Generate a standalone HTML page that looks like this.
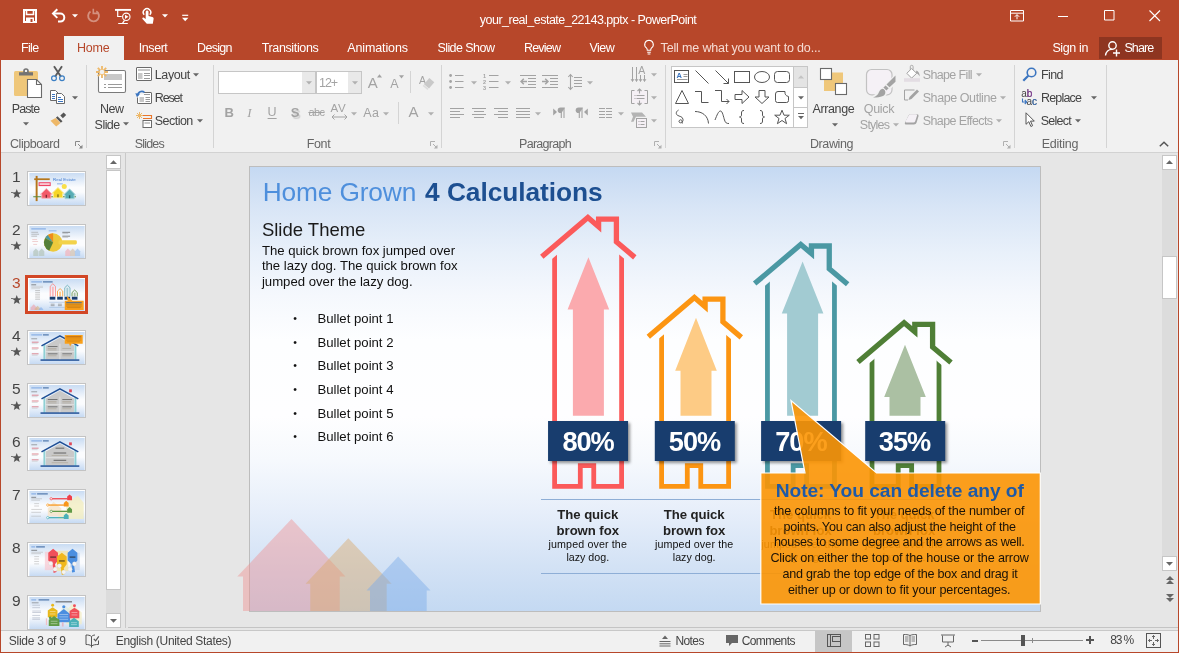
<!DOCTYPE html>
<html><head><meta charset="utf-8"><title>PowerPoint</title>
<style>
*{box-sizing:border-box;margin:0;padding:0}
html,body{width:1179px;height:653px;overflow:hidden;background:#e6e6e6;font-family:"Liberation Sans",sans-serif;font-size:12px;color:#444}
.abs{position:absolute}
#win{position:absolute;left:0;top:0;width:1179px;height:653px;overflow:hidden;background:#e6e6e6}
#titlebar{position:absolute;left:0;top:0;width:1179px;height:60px;background:#b7472a}
#ribbon{position:absolute;left:1px;top:60px;width:1177px;height:92px;background:#f1f1f1}
#ribline{position:absolute;left:1px;top:152px;width:1177px;height:1px;background:#d2d2d2}
#status{position:absolute;left:1px;top:631px;width:1177px;height:21px;background:#f1f1f1}
.bl{position:absolute;top:60px;width:1px;height:593px;background:#b7472a}
.t{position:absolute;white-space:nowrap;line-height:1}
.w{color:#fff}
</style></head><body>
<div id="win"><div id="ly" style="position:absolute;left:0;top:0;width:1179px;height:653px;will-change:transform">
<div id="titlebar"></div>
<div id="ribbon"></div>
<div id="ribline"></div>
<div class="abs" style="left:64px;top:36px;width:60px;height:25px;background:#f1f1f1;"></div>
<div class="t" style="left:21.00px;top:41.75px;font-size:12.5px;color:#fff;letter-spacing:-0.660px;">File</div>
<div class="t" style="left:77.00px;top:41.75px;font-size:12.5px;color:#b7472a;letter-spacing:-0.210px;">Home</div>
<div class="t" style="left:138.80px;top:41.75px;font-size:12.5px;color:#fff;letter-spacing:-0.443px;">Insert</div>
<div class="t" style="left:197.10px;top:41.75px;font-size:12.5px;color:#fff;letter-spacing:-0.718px;">Design</div>
<div class="t" style="left:261.70px;top:41.75px;font-size:12.5px;color:#fff;letter-spacing:-0.361px;">Transitions</div>
<div class="t" style="left:347.20px;top:41.75px;font-size:12.5px;color:#fff;letter-spacing:-0.113px;">Animations</div>
<div class="t" style="left:437.40px;top:41.75px;font-size:12.5px;color:#fff;letter-spacing:-0.554px;">Slide Show</div>
<div class="t" style="left:523.90px;top:41.75px;font-size:12.5px;color:#fff;letter-spacing:-0.781px;">Review</div>
<div class="t" style="left:589.40px;top:41.75px;font-size:12.5px;color:#fff;letter-spacing:-0.517px;">View</div>
<div class="t" style="left:660.60px;top:41.75px;font-size:12.5px;color:#f6dcd4;letter-spacing:-0.155px;">Tell me what you want to do...</div>
<div class="t" style="left:479.80px;top:13.75px;font-size:12.5px;color:#fff;letter-spacing:-0.511px;">your_real_estate_22143.pptx - PowerPoint</div>
<div class="t" style="left:1052.40px;top:41.75px;font-size:12.5px;color:#fff;letter-spacing:-0.374px;">Sign in</div>
<div class="abs" style="left:1099px;top:37px;width:63px;height:22px;background:#8e3520;"></div>
<div class="t" style="left:1124.40px;top:41.75px;font-size:12.5px;color:#fff;letter-spacing:-0.871px;">Share</div>
<svg class="abs" style="left:1104px;top:40px;" width="18" height="17" viewBox="0 0 18 17"><g fill="none" stroke="#fff" stroke-width="1.4"><circle cx="8.5" cy="5.5" r="3.7"/><path d="M1.5 15.5 C2.2 11.2 5 9.4 8 9.4"/><path d="M12.5 9.5v7M9 13h7"/></g></svg>
<svg class="abs" style="left:643px;top:39px;" width="12" height="17" viewBox="0 0 12 17"><g fill="none" stroke="#fff" stroke-width="1.1"><path d="M6 1.2a4.3 4.3 0 0 0-2.6 7.7c.6.6.9 1.3.9 2.4h3.4c0-1.1.3-1.8.9-2.4A4.3 4.3 0 0 0 6 1.200z"/><path d="M4.200 13.2h3.600M4.600 15h2.800"/></g></svg>
<svg class="abs" style="left:22px;top:8px;" width="16" height="16" viewBox="0 0 16 16"><path d="M2 2h12v12h-12z" fill="none" stroke="#fff" stroke-width="2"/><path d="M4.500 2.500v4h7v-4" fill="none" stroke="#fff" stroke-width="1.600"/><path d="M4 9.500h8v4.500h-8z" fill="#fff"/><rect x="8.500" y="11" width="2" height="3" fill="#b7472a"/></svg>
<svg class="abs" style="left:51px;top:8px;" width="17" height="15" viewBox="0 0 17 15"><g fill="none" stroke="#fff" stroke-width="2" stroke-linejoin="miter"><path d="M6.300 1.300L2 5.600l4.300 4.300"/><path d="M2.500 5.600h6.800a4 4 0 0 1 0 8.000h-2.300"/></g></svg>
<svg class="abs" style="left:71.5px;top:14px;" width="6" height="4" viewBox="0 0 6 4"><path d="M0 0.300h6l-3 3.200z" fill="#fff"/></svg>
<svg class="abs" style="left:86px;top:8px;" width="16" height="16" viewBox="0 0 16 16"><g fill="none" stroke="#d4907e" stroke-width="1.900"><path d="M10.300 3.300a5.400 5.400 0 1 1-5.800 0.200"/><path d="M7.300 0.800v4.600h4.600" stroke-width="1.600"/></g></svg>
<svg class="abs" style="left:114px;top:8px;" width="19" height="17" viewBox="0 0 19 17"><g fill="none" stroke="#fff"><path d="M1 1.900h16" stroke-width="1.900"/><path d="M3.700 2v6.500h4" stroke-width="1.200"/><circle cx="12.300" cy="8.800" r="3.700" stroke-width="1.100"/><path d="M10.500 12.300l-2 3M4.200 15.500h9.600" stroke-width="1.200"/></g><path d="M11 6.700v4.200l3.400-2.100z" fill="#fff"/></svg>
<svg class="abs" style="left:141px;top:6px;" width="14" height="19" viewBox="0 0 14 19"><g fill="none" stroke="#fff" stroke-width="1.500"><path d="M3.200 8.800a3.700 3.700 0 1 1 5.600 0"/></g><path d="M4.700 5.800a1.400 1.400 0 0 1 2.800 0v4.300l3.800 0.800c1 0.200 1.500 0.900 1.300 2l-0.800 4.800h-6l-4.300-4.800c-0.600-0.900 0.300-1.900 1.400-1.200l1.800 1.300z" fill="#fff"/></svg>
<svg class="abs" style="left:161.5px;top:14px;" width="6" height="4" viewBox="0 0 6 4"><path d="M0 0.300h6l-3 3.200z" fill="#fff"/></svg>
<svg class="abs" style="left:182px;top:14px;" width="7" height="8" viewBox="0 0 7 8"><path d="M0.200 1.300h6" stroke="#fff" stroke-width="1.200"/><path d="M0 3.800h6.400l-3.200 3.400z" fill="#fff"/></svg>
<svg class="abs" style="left:1010px;top:10px;" width="14" height="12" viewBox="0 0 14 12"><g fill="none" stroke="#fff" stroke-width="1"><path d="M0.500 0.500h13v10.500h-13z"/><path d="M0.500 3.200h13"/><path d="M7 9.300v-4.500M4.800 6.800l2.200-2.200 2.200 2.200"/></g></svg>
<div class="abs" style="left:1058px;top:16px;width:10px;height:1px;background:#fff;"></div>
<svg class="abs" style="left:1104px;top:10px;" width="11" height="11" viewBox="0 0 11 11"><path d="M0.500 0.500h9.500v9.500h-9.500z" fill="none" stroke="#fff" stroke-width="1"/></svg>
<svg class="abs" style="left:1149px;top:10px;" width="12" height="12" viewBox="0 0 12 12"><path d="M0.500 0.500l10.500 10.500M11 0.500l-10.500 10.500" fill="none" stroke="#fff" stroke-width="1.100"/></svg>
<div class="abs" style="left:86px;top:65px;width:1px;height:83px;background:#d4d4d4;"></div>
<div class="abs" style="left:213px;top:65px;width:1px;height:83px;background:#d4d4d4;"></div>
<div class="abs" style="left:441px;top:65px;width:1px;height:83px;background:#d4d4d4;"></div>
<div class="abs" style="left:665px;top:65px;width:1px;height:83px;background:#d4d4d4;"></div>
<div class="abs" style="left:1014px;top:65px;width:1px;height:83px;background:#d4d4d4;"></div>
<div class="abs" style="left:1106px;top:65px;width:1px;height:83px;background:#d4d4d4;"></div>
<svg class="abs" style="left:13px;top:67px;" width="30" height="32" viewBox="0 0 30 32"><rect x="1" y="4" width="24" height="25" rx="1.500" fill="#efc77a"/>
<path d="M6 8.500v-3.200h4.200v-1.300a2.800 2.800 0 0 1 5.600 0v1.300h4.200v3.200z" fill="#737373"/><circle cx="13" cy="3.900" r="1.200" fill="#f1f1f1"/>
<path d="M14.500 12.500h9l5 5v13h-14z" fill="#fff" stroke="#6a6a6a" stroke-width="1.100"/><path d="M23.500 12.500v5h5" fill="none" stroke="#6a6a6a" stroke-width="1.100"/></svg>
<div class="t" style="left:11.80px;top:102.75px;font-size:12.5px;color:#444;letter-spacing:-0.913px;">Paste</div>
<svg class="abs" style="left:22.6px;top:122px;" width="6" height="4" viewBox="0 0 6 4"><path d="M0 0.200h6l-3 3.300z" fill="#666"/></svg>
<svg class="abs" style="left:50px;top:65px;" width="16" height="17" viewBox="0 0 16 17"><g fill="none"><path d="M4 1.300l7 10.500M12 1.300l-7 10.500" stroke="#5a5a5a" stroke-width="1.900"/><circle cx="4" cy="13.300" r="2.400" stroke="#3b7fc4" stroke-width="1.200"/><circle cx="12" cy="13.300" r="2.400" stroke="#3b7fc4" stroke-width="1.200"/></g></svg>
<svg class="abs" style="left:49px;top:89px;" width="17" height="16" viewBox="0 0 17 16"><g fill="#fff" stroke="#6a6a6a" stroke-width="1"><path d="M1.500 1.500h5l3 3v7h-8z"/><path d="M7.500 4.500h5l3 3v7h-8z"/></g><g stroke="#3b75c0" stroke-width="1"><path d="M3 5.500h3M3 7.500h3M3 9.500h3M9 8.500h3M9 10.500h5M9 12.500h5"/></g></svg>
<svg class="abs" style="left:71.7px;top:95.5px;" width="6" height="4" viewBox="0 0 6 4"><path d="M0 0.200h6l-3 3.300z" fill="#666"/></svg>
<svg class="abs" style="left:50px;top:112px;" width="17" height="15" viewBox="0 0 17 15"><path d="M10.300 3.600l3.300-3.200 2.600 2.600-3.300 3.200z" fill="#555"/><path d="M7.500 4.200l5 5-1.600 1.600-5-5z" fill="#555"/><path d="M5.600 6.100l4.900 4.900-4.300 3.600-5.700-5.900z" fill="#eeb868"/></svg>
<div class="t" style="left:10.00px;top:137.75px;font-size:12.5px;color:#666;letter-spacing:-0.433px;">Clipboard</div>
<svg class="abs" style="left:74.5px;top:140.5px;" width="8" height="8" viewBox="0 0 8 8"><g fill="none" stroke="#8a8a8a" stroke-width="1"><path d="M0.500 5v-4.500h4.500"/><path d="M3 3l4 4"/></g><path d="M7.500 3.800v3.700h-3.700z" fill="#8a8a8a"/></svg>
<svg class="abs" style="left:95px;top:64px;" width="32" height="30" viewBox="0 0 32 30"><rect x="3.500" y="6.500" width="27" height="22" rx="1.500" fill="#fff" stroke="#7a7a7a" stroke-width="1.100"/><rect x="9" y="10" width="18" height="6" fill="#c8c8c8"/><path d="M9 20.500h2M13 20.500h14M9 23.500h2M13 23.500h14" stroke="#9a9a9a" stroke-width="1"/>
<g transform="translate(0,1)"><g stroke="#eeb868" stroke-width="1.800"><path d="M7 1v12M1 7h12M2.800 2.800l8.400 8.400M11.200 2.800l-8.400 8.400"/></g><circle cx="7" cy="7" r="2.300" fill="#f1f1f1"/></g></svg>
<div class="t" style="left:100.00px;top:102.75px;font-size:12.5px;color:#444;letter-spacing:-0.535px;">New</div>
<div class="t" style="left:94.60px;top:118.75px;font-size:12.5px;color:#444;letter-spacing:-0.539px;">Slide</div>
<svg class="abs" style="left:122.8px;top:122px;" width="6" height="4" viewBox="0 0 6 4"><path d="M0 0.200h6l-3 3.300z" fill="#666"/></svg>
<svg class="abs" style="left:136px;top:67px;" width="17" height="15" viewBox="0 0 17 15"><rect x="0.500" y="0.500" width="15" height="13" rx="0.500" fill="#fff" stroke="#6a6a6a" stroke-width="1"/><rect x="2" y="2" width="12" height="2" fill="#c8c8c8"/><rect x="2" y="6" width="4.500" height="6" fill="#c8c8c8"/><path d="M8 6.500h6M8 8.500h6M8 11.500h6" stroke="#9a9a9a" stroke-width="1"/></svg>
<div class="t" style="left:154.80px;top:68.75px;font-size:12.5px;color:#444;letter-spacing:-0.405px;">Layout</div>
<svg class="abs" style="left:193.4px;top:72.5px;" width="6" height="4" viewBox="0 0 6 4"><path d="M0 0.200h6l-3 3.300z" fill="#666"/></svg>
<svg class="abs" style="left:135px;top:89px;" width="18" height="16" viewBox="0 0 18 16"><rect x="2.500" y="3.500" width="14" height="11" rx="0.500" fill="#fff" stroke="#6a6a6a" stroke-width="1"/><rect x="4.500" y="8" width="4.500" height="5" fill="#c8c8c8"/><path d="M10.500 8.500h4.500M10.500 10.500h4.500M10.500 12.500h4.500M9 5.500h6" stroke="#9a9a9a" stroke-width="1"/>
<path d="M0 1h9v4.500h-5.500v3h-3.500z" fill="#f1f1f1"/><path d="M2.800 6.500a4 4 0 0 1 6.700-3" fill="none" stroke="#3b75c0" stroke-width="1.600"/><path d="M0.300 4.300l4.800 0.500-3.100 3.500z" fill="#3b75c0"/></svg>
<div class="t" style="left:154.80px;top:91.75px;font-size:12.5px;color:#444;letter-spacing:-1.150px;">Reset</div>
<svg class="abs" style="left:135px;top:111px;" width="19" height="18" viewBox="0 0 19 18"><g stroke="#eeb868" stroke-width="1"><path d="M4.500 1v7M1 4.500h7M2 2l5 5M7 2l-5 5"/></g><path d="M8 4.500h8.500v3h-8.500" fill="none" stroke="#e8762c" stroke-width="1.100"/><rect x="8" y="9.500" width="8.500" height="7" fill="#fff" stroke="#6a6a6a" stroke-width="1"/><rect x="9.500" y="11" width="5.500" height="2" fill="#c8c8c8"/></svg>
<div class="t" style="left:154.80px;top:114.75px;font-size:12.5px;color:#444;letter-spacing:-0.542px;">Section</div>
<svg class="abs" style="left:196.8px;top:118.5px;" width="6" height="4" viewBox="0 0 6 4"><path d="M0 0.200h6l-3 3.300z" fill="#666"/></svg>
<div class="t" style="left:134.70px;top:137.75px;font-size:12.5px;color:#666;letter-spacing:-0.807px;">Slides</div>
<div class="abs" style="left:218px;top:71px;width:98px;height:23px;background:#fff;border:1px solid #c6c6c6"></div>
<div class="abs" style="left:302px;top:72px;width:13px;height:21px;background:#e9e9e9;"></div>
<svg class="abs" style="left:305.5px;top:81px;" width="6" height="4" viewBox="0 0 6 4"><path d="M0 0.200h6l-3 3.300z" fill="#b0b0b0"/></svg>
<div class="abs" style="left:316px;top:71px;width:46px;height:23px;background:#fff;border:1px solid #c6c6c6"></div>
<div class="abs" style="left:348px;top:72px;width:13px;height:21px;background:#e9e9e9;"></div>
<svg class="abs" style="left:351.5px;top:81px;" width="6" height="4" viewBox="0 0 6 4"><path d="M0 0.200h6l-3 3.300z" fill="#b0b0b0"/></svg>
<div class="t" style="left:319.00px;top:76.75px;font-size:12.5px;color:#a3a3a3;letter-spacing:-1.068px;">12+</div>
<div class="t" style="left:367.70px;top:75.00px;font-size:15px;color:#a3a3a3;">A</div>
<svg class="abs" style="left:376.5px;top:74px;" width="5" height="4" viewBox="0 0 5 4"><path d="M0 3.500h5l-2.500-3.300z" fill="#a3a3a3"/></svg>
<div class="t" style="left:390.20px;top:77.75px;font-size:12.5px;color:#a3a3a3;">A</div>
<svg class="abs" style="left:398.5px;top:74.5px;" width="5" height="4" viewBox="0 0 5 4"><path d="M0 0.200h5l-2.500 3.300z" fill="#a3a3a3"/></svg>
<div class="abs" style="left:410px;top:71px;width:1px;height:22px;background:#d4d4d4;"></div>
<div class="t" style="left:418.90px;top:74.75px;font-size:10.5px;color:#a3a3a3;">A</div>
<svg class="abs" style="left:421px;top:77px;" width="14" height="13" viewBox="0 0 14 13"><path d="M8.300 1l5 4.200-5.300 6.300-5-4.200z" fill="#c9c9c9"/><path d="M2.700 7.800l4.800 4-1 1.100-4.800-4z" fill="#dcdcdc"/></svg>
<div class="t" style="left:224.40px;top:106.00px;font-size:13px;color:#a3a3a3;font-weight:bold;">B</div>
<div class="t" style="left:247.20px;top:106.00px;font-size:13px;color:#a3a3a3;font-style:italic;font-family:'Liberation Serif',serif;">I</div>
<div class="t" style="left:267.60px;top:105.75px;font-size:12.5px;color:#a3a3a3;text-decoration:underline;text-underline-offset:1.500px;">U</div>
<div class="t" style="left:290.70px;top:106.00px;font-size:13px;color:#a3a3a3;font-weight:bold;text-shadow:1.500px 1.500px 1px #cfcfcf;">S</div>
<div class="t" style="left:308.40px;top:106.50px;font-size:11px;color:#a3a3a3;letter-spacing:-0.511px;text-decoration:line-through;">abc</div>
<div class="t" style="left:330.60px;top:103.25px;font-size:11.5px;color:#a3a3a3;letter-spacing:0.656px;">AV</div>
<svg class="abs" style="left:331px;top:114px;" width="17" height="6" viewBox="0 0 17 6"><path d="M1 3h15M3.500 0.500l-2.500 2.500 2.500 2.500M13.500 0.500l2.500 2.500-2.500 2.500" fill="none" stroke="#a3a3a3" stroke-width="1"/></svg>
<svg class="abs" style="left:350.8px;top:111.5px;" width="6" height="4" viewBox="0 0 6 4"><path d="M0 0.200h6l-3 3.300z" fill="#b0b0b0"/></svg>
<div class="t" style="left:363.30px;top:106.75px;font-size:12.5px;color:#a3a3a3;letter-spacing:0.305px;">Aa</div>
<svg class="abs" style="left:383.4px;top:111.5px;" width="6" height="4" viewBox="0 0 6 4"><path d="M0 0.200h6l-3 3.300z" fill="#b0b0b0"/></svg>
<div class="abs" style="left:398px;top:102px;width:1px;height:22px;background:#d4d4d4;"></div>
<div class="t" style="left:408.40px;top:104.00px;font-size:15px;color:#a3a3a3;">A</div>
<svg class="abs" style="left:427.6px;top:111.5px;" width="6" height="4" viewBox="0 0 6 4"><path d="M0 0.200h6l-3 3.300z" fill="#b0b0b0"/></svg>
<div class="t" style="left:306.70px;top:137.75px;font-size:12.5px;color:#666;letter-spacing:-0.327px;">Font</div>
<svg class="abs" style="left:429.8px;top:140.5px;" width="8" height="8" viewBox="0 0 8 8"><g fill="none" stroke="#b0b0b0" stroke-width="1"><path d="M0.500 5v-4.500h4.500"/><path d="M3 3l4 4"/></g><path d="M7.500 3.800v3.700h-3.700z" fill="#b0b0b0"/></svg>
<svg class="abs" style="left:449px;top:73px;" width="16" height="17" viewBox="0 0 16 17"><g fill="#a3a3a3"><circle cx="1.600" cy="2.500" r="1.400"/><circle cx="1.600" cy="8.500" r="1.400"/><circle cx="1.600" cy="14.500" r="1.400"/></g><path d="M6 2.500h8.500M6 8.500h8.500M6 14.500h8.500" stroke="#a3a3a3" stroke-width="1"/></svg>
<svg class="abs" style="left:470.6px;top:80.5px;" width="6" height="4" viewBox="0 0 6 4"><path d="M0 0.200h6l-3 3.300z" fill="#b0b0b0"/></svg>
<svg class="abs" style="left:483px;top:73px;" width="16" height="17" viewBox="0 0 16 17"><path d="M6 2.500h9.500M6 8.500h9.500M6 14.500h9.500" stroke="#a3a3a3" stroke-width="1"/><g font-family="Liberation Sans,sans-serif" font-size="5.500" font-weight="bold" fill="#a3a3a3"><text x="0" y="4.500">1</text><text x="0" y="10.500">2</text><text x="0" y="16.500">3</text></g></svg>
<svg class="abs" style="left:504.5px;top:80.5px;" width="6" height="4" viewBox="0 0 6 4"><path d="M0 0.200h6l-3 3.300z" fill="#b0b0b0"/></svg>
<svg class="abs" style="left:520px;top:73px;" width="17" height="16" viewBox="0 0 17 16"><path d="M0 2.500h16M8 5.500h8M8 8.500h8M8 11.500h8M0 14.500h16" stroke="#a3a3a3" stroke-width="1"/><path d="M1 8.500h6M3.800 5.700l-2.800 2.800 2.800 2.800" fill="none" stroke="#a3a3a3" stroke-width="1.500"/></svg>
<svg class="abs" style="left:542px;top:73px;" width="17" height="16" viewBox="0 0 17 16"><path d="M0 2.500h16M8 5.500h8M8 8.500h8M8 11.500h8M0 14.500h16" stroke="#a3a3a3" stroke-width="1"/><path d="M0 8.500h6M3.200 5.700l2.800 2.800-2.800 2.800" fill="none" stroke="#a3a3a3" stroke-width="1.500"/></svg>
<svg class="abs" style="left:567px;top:73px;" width="16" height="18" viewBox="0 0 16 18"><path d="M7 4.500h8M7 7.500h8M7 10.500h8M7 13.500h8" stroke="#a3a3a3" stroke-width="1"/><path d="M3.500 1.500v15M1.300 4l2.200-2.500 2.200 2.500M1.300 14l2.200 2.500 2.200-2.500" fill="none" stroke="#a3a3a3" stroke-width="1.100"/></svg>
<svg class="abs" style="left:587.3px;top:80.5px;" width="6" height="4" viewBox="0 0 6 4"><path d="M0 0.200h6l-3 3.300z" fill="#b0b0b0"/></svg>
<svg class="abs" style="left:450px;top:107px;" width="15" height="12" viewBox="0 0 15 12"><path d="M0 1.500h14M0 4.500h10M0 7.500h14M0 10.500h10" stroke="#a3a3a3" stroke-width="1"/></svg>
<svg class="abs" style="left:472px;top:107px;" width="15" height="12" viewBox="0 0 15 12"><path d="M0 1.500h14M2 4.500h10M0 7.500h14M2 10.500h10" stroke="#a3a3a3" stroke-width="1"/></svg>
<svg class="abs" style="left:494px;top:107px;" width="15" height="12" viewBox="0 0 15 12"><path d="M0 1.500h14M4 4.500h10M0 7.500h14M4 10.500h10" stroke="#a3a3a3" stroke-width="1"/></svg>
<svg class="abs" style="left:516px;top:107px;" width="15" height="12" viewBox="0 0 15 12"><path d="M0 1.500h14M0 4.500h14M0 7.500h14M0 10.500h14" stroke="#a3a3a3" stroke-width="1"/></svg>
<svg class="abs" style="left:534.5px;top:111.5px;" width="6" height="4" viewBox="0 0 6 4"><path d="M0 0.200h6l-3 3.300z" fill="#b0b0b0"/></svg>
<svg class="abs" style="left:553px;top:107px;" width="13" height="12" viewBox="0 0 13 12"><path d="M0.200 1.500v7l3.800-3.500z" fill="#a3a3a3"/><path d="M8.300 1v10M11 1v10" stroke="#a3a3a3" stroke-width="1.100"/><path d="M12 0.500h-4.500a2.800 2.800 0 0 0 0 5.600h1z" fill="#a3a3a3"/></svg>
<svg class="abs" style="left:575px;top:107px;" width="13" height="12" viewBox="0 0 13 12"><path d="M12.800 1.500v7l-3.800-3.500z" fill="#a3a3a3"/><path d="M4.300 1v10M7 1v10" stroke="#a3a3a3" stroke-width="1.100"/><path d="M8 0.500h-4.500a2.800 2.800 0 0 0 0 5.600h1z" fill="#a3a3a3"/></svg>
<svg class="abs" style="left:599px;top:107px;" width="15" height="12" viewBox="0 0 15 12"><path d="M0 1.500h6M7 1.500h6M0 4.500h6M7 4.500h6M0 7.500h6M7 7.500h6M0 10.500h6M7 10.500h6" stroke="#a3a3a3" stroke-width="1"/></svg>
<svg class="abs" style="left:617.8px;top:111.5px;" width="6" height="4" viewBox="0 0 6 4"><path d="M0 0.200h6l-3 3.300z" fill="#b0b0b0"/></svg>
<svg class="abs" style="left:630px;top:65px;" width="18" height="18" viewBox="0 0 18 18"><path d="M2.500 2v14.500M6.500 2v14.500M10.500 10v6.500M14.500 10v6.500" stroke="#a3a3a3" stroke-width="1"/><path d="M1 14.500l1.500 2 1.500-2zM5 14.500l1.500 2 1.500-2zM9 14.500l1.500 2 1.500-2zM13 14.500l1.500 2 1.500-2z" fill="#a3a3a3" stroke="#a3a3a3" stroke-width="0.500"/><text x="8.300" y="9" font-family="Liberation Sans,sans-serif" font-size="10.500" fill="#a3a3a3">A</text></svg>
<svg class="abs" style="left:651px;top:72.5px;" width="6" height="4" viewBox="0 0 6 4"><path d="M0 0.200h6l-3 3.300z" fill="#b0b0b0"/></svg>
<svg class="abs" style="left:630px;top:88px;" width="18" height="18" viewBox="0 0 18 18"><rect x="2" y="2.500" width="15" height="13" fill="#f5f0f5"/><path d="M4.500 2.500h-3v13h3M14.500 2.500h3v13h-3" fill="none" stroke="#a3a3a3" stroke-width="1"/><path d="M4.500 7.500h1M6.500 7.500h8M4.500 10.500h1M6.500 10.500h8" stroke="#a3a3a3" stroke-width="1"/><path d="M9.500 1v4.500M7.500 3l2-2 2 2M9.500 17v-4.500M7.500 15l2 2 2-2" fill="none" stroke="#a3a3a3" stroke-width="1.100"/></svg>
<svg class="abs" style="left:651px;top:95.5px;" width="6" height="4" viewBox="0 0 6 4"><path d="M0 0.200h6l-3 3.300z" fill="#b0b0b0"/></svg>
<svg class="abs" style="left:630px;top:111px;" width="18" height="18" viewBox="0 0 18 18"><path d="M1 1.500h11l4 4.300h-10l-2.500 5h-2.500l2-5z" fill="#b4b4b4"/><rect x="6.500" y="7.500" width="10" height="9" fill="#f5f0f5" stroke="#a3a3a3" stroke-width="1"/><path d="M8.500 10.500h1M10.500 10.500h4M8.500 13.500h1M10.500 13.500h4" stroke="#a3a3a3" stroke-width="1"/></svg>
<svg class="abs" style="left:651px;top:118.5px;" width="6" height="4" viewBox="0 0 6 4"><path d="M0 0.200h6l-3 3.300z" fill="#b0b0b0"/></svg>
<div class="t" style="left:519.10px;top:137.75px;font-size:12.5px;color:#666;letter-spacing:-0.730px;">Paragraph</div>
<svg class="abs" style="left:653.8px;top:140.5px;" width="8" height="8" viewBox="0 0 8 8"><g fill="none" stroke="#b0b0b0" stroke-width="1"><path d="M0.500 5v-4.500h4.500"/><path d="M3 3l4 4"/></g><path d="M7.500 3.800v3.700h-3.700z" fill="#b0b0b0"/></svg>
<div class="abs" style="left:671px;top:66px;width:137px;height:62px;background:#fff;border:1px solid #c6c6c6"></div>
<div class="abs" style="left:793px;top:67px;width:1px;height:60px;background:#c6c6c6;"></div>
<div class="abs" style="left:794px;top:67px;width:13px;height:20px;background:#e4e4e4;"></div>
<div class="abs" style="left:794px;top:87px;width:13px;height:1px;background:#c6c6c6;"></div>
<div class="abs" style="left:794px;top:107px;width:13px;height:1px;background:#c6c6c6;"></div>
<svg class="abs" style="left:797.5px;top:74.5px;" width="6" height="4" viewBox="0 0 6 4"><path d="M0 3.500h6l-3-3.300z" fill="#c3c3c3"/></svg>
<svg class="abs" style="left:797.5px;top:95.5px;" width="6" height="4" viewBox="0 0 6 4"><path d="M0 0.200h6l-3 3.300z" fill="#666"/></svg>
<svg class="abs" style="left:797.5px;top:113px;" width="6" height="8" viewBox="0 0 6 8"><path d="M0 0.500h6" stroke="#666" stroke-width="1"/><path d="M0 3h6l-3 3.300z" fill="#666"/></svg>
<svg class="abs" style="left:674px;top:69px;" width="16" height="16" viewBox="0 0 16 16"><g fill="none" stroke="#555" stroke-width="1"><rect x="0.500" y="1.500" width="14" height="12"/><path d="M9.500 5.500h4M9.500 7.500h4M3 10.500h10.500" stroke="#9a9a9a"/><text x="2.500" y="9" font-family="Liberation Sans,sans-serif" font-size="7.500" font-weight="bold" fill="#3b75c0" stroke="none">A</text></g></svg>
<svg class="abs" style="left:694px;top:69px;" width="16" height="16" viewBox="0 0 16 16"><g fill="none" stroke="#555" stroke-width="1"><path d="M1.500 1.500l13 13"/></g></svg>
<svg class="abs" style="left:714px;top:69px;" width="16" height="16" viewBox="0 0 16 16"><g fill="none" stroke="#555" stroke-width="1"><path d="M1.500 1.500l13 13M14.500 9.500v5h-5"/></g></svg>
<svg class="abs" style="left:734px;top:69px;" width="16" height="16" viewBox="0 0 16 16"><g fill="none" stroke="#555" stroke-width="1"><rect x="0.500" y="2.500" width="15" height="11"/></g></svg>
<svg class="abs" style="left:754px;top:69px;" width="16" height="16" viewBox="0 0 16 16"><g fill="none" stroke="#555" stroke-width="1"><ellipse cx="8" cy="8" rx="7.500" ry="5.500"/></g></svg>
<svg class="abs" style="left:774px;top:69px;" width="16" height="16" viewBox="0 0 16 16"><g fill="none" stroke="#555" stroke-width="1"><rect x="0.500" y="2.500" width="15" height="11" rx="3"/></g></svg>
<svg class="abs" style="left:674px;top:89px;" width="16" height="16" viewBox="0 0 16 16"><g fill="none" stroke="#555" stroke-width="1"><path d="M8 1.500l6.500 13h-13z"/></g></svg>
<svg class="abs" style="left:694px;top:89px;" width="16" height="16" viewBox="0 0 16 16"><g fill="none" stroke="#555" stroke-width="1"><path d="M1 2.500h6.500v11h7"/></g></svg>
<svg class="abs" style="left:714px;top:89px;" width="16" height="16" viewBox="0 0 16 16"><g fill="none" stroke="#555" stroke-width="1"><path d="M1 1.500h6.500v11h7.500M12.500 10l2.500 2.500-2.500 2.500"/></g></svg>
<svg class="abs" style="left:734px;top:89px;" width="16" height="16" viewBox="0 0 16 16"><g fill="none" stroke="#555" stroke-width="1"><path d="M1 5.500h7v-4l7 6.500-7 6.500v-4h-7z"/></g></svg>
<svg class="abs" style="left:754px;top:89px;" width="16" height="16" viewBox="0 0 16 16"><g fill="none" stroke="#555" stroke-width="1"><path d="M5 1.500h6v6.500h4l-7 6.500-7-6.500h4z"/></g></svg>
<svg class="abs" style="left:774px;top:89px;" width="16" height="16" viewBox="0 0 16 16"><g fill="none" stroke="#555" stroke-width="1"><path d="M1.500 5a2.500 2.500 0 0 1 2.500-2.500h7a4.500 4.500 0 0 0 3.500 5v4a2 2 0 0 1-2 2h-9a2 2 0 0 1-2-2z"/></g></svg>
<svg class="abs" style="left:674px;top:109px;" width="16" height="16" viewBox="0 0 16 16"><g fill="none" stroke="#555" stroke-width="1"><path d="M4.500 1c-2.500 1.500-3 4-1 5.300s5 1 5.500 4c0.300 2-1 3.500-2.500 3.500s-2-1.500-1-2.500 2.500-0.500 2.500 1l0.300 2.200"/></g></svg>
<svg class="abs" style="left:694px;top:109px;" width="16" height="16" viewBox="0 0 16 16"><g fill="none" stroke="#555" stroke-width="1"><path d="M1 2.500c7 0 13 4 13.500 12"/></g></svg>
<svg class="abs" style="left:714px;top:109px;" width="16" height="16" viewBox="0 0 16 16"><g fill="none" stroke="#555" stroke-width="1"><path d="M1 11c2-5 3.500-9 5.500-9s3 6 4 9 2 3.500 4.500 3.500"/></g></svg>
<svg class="abs" style="left:734px;top:109px;" width="16" height="16" viewBox="0 0 16 16"><g fill="none" stroke="#555" stroke-width="1"><path d="M10 1.500c-2 0-2.500 0.800-2.500 2.500v2c0 1.300-0.800 2-2 2 1.200 0 2 0.700 2 2v2c0 1.700 0.500 2.500 2.500 2.500"/></g></svg>
<svg class="abs" style="left:754px;top:109px;" width="16" height="16" viewBox="0 0 16 16"><g fill="none" stroke="#555" stroke-width="1"><path d="M6 1.500c2 0 2.500 0.800 2.500 2.500v2c0 1.300 0.800 2 2 2-1.200 0-2 0.700-2 2v2c0 1.700-0.500 2.500-2.500 2.500"/></g></svg>
<svg class="abs" style="left:774px;top:109px;" width="16" height="16" viewBox="0 0 16 16"><g fill="none" stroke="#555" stroke-width="1"><path d="M8 1.200l2 5h5.300l-4.300 3.300 1.600 5.200-4.600-3.200-4.600 3.200 1.600-5.200-4.300-3.300h5.300z"/></g></svg>
<svg class="abs" style="left:819px;top:67px;" width="30" height="29" viewBox="0 0 30 29"><rect x="5" y="5.500" width="19" height="18.500" fill="#efc77a"/><rect x="1.500" y="1.500" width="11" height="11" fill="#fff" stroke="#6a6a6a" stroke-width="1.100"/><rect x="16.500" y="16.500" width="11" height="11" fill="#fff" stroke="#6a6a6a" stroke-width="1.100"/></svg>
<div class="t" style="left:812.40px;top:102.75px;font-size:12.5px;color:#444;letter-spacing:-0.352px;">Arrange</div>
<svg class="abs" style="left:831.6px;top:122.5px;" width="6" height="4" viewBox="0 0 6 4"><path d="M0 0.200h6l-3 3.300z" fill="#666"/></svg>
<svg class="abs" style="left:865px;top:68px;" width="32" height="31" viewBox="0 0 32 31"><rect x="1.500" y="1.500" width="25.500" height="25.300" rx="5" fill="#f5f1f6" stroke="#c2c2c2" stroke-width="1.200"/><path d="M31 6.500v8l-6.500 6.500-4-3.600z" fill="#f1f1f1" stroke="#f1f1f1" stroke-width="1.600"/><path d="M17.500 20.500l3.500 5.500-3 3.800-12 0.800 6-5z" fill="#f1f1f1" stroke="#f1f1f1" stroke-width="1.600"/><path d="M30.500 7.500v6.300l-6 5.500-3-2.800z" fill="#a3a3a3"/><path d="M20.600 17.400l3 2.800-2.200 2.200-3-2.800z" fill="#a3a3a3"/><path d="M17.500 20.700c2 0.500 3.200 2.300 2.800 4.300c-0.500 3-3.500 4.200-12.300 4.600c3.500-1.600 5-3.300 5.800-5.200c0.700-1.800 2-3.400 3.700-3.700z" fill="#a3a3a3"/></svg>
<div class="t" style="left:863.80px;top:102.75px;font-size:12.5px;color:#a3a3a3;letter-spacing:-0.310px;">Quick</div>
<div class="t" style="left:859.80px;top:118.75px;font-size:12.5px;color:#a3a3a3;letter-spacing:-0.757px;">Styles</div>
<svg class="abs" style="left:892.6px;top:122.5px;" width="6" height="4" viewBox="0 0 6 4"><path d="M0 0.200h6l-3 3.300z" fill="#b0b0b0"/></svg>
<svg class="abs" style="left:904px;top:63px;" width="18" height="20" viewBox="0 0 18 20"><path d="M2.800 10.300l4.800-4.700 5.100 4.700-5.100 4.800z" fill="#fff" stroke="#a3a3a3" stroke-width="1"/><path d="M6.300 7v-3.300a1.400 1.400 0 0 1 2.800 0v3" fill="none" stroke="#a3a3a3" stroke-width="0.900"/><path d="M12.300 7.500c2 0.800 3.300 2.800 3.500 6c-1.200-1.800-2.300-2.800-3.800-3.400z" fill="#a3a3a3"/><rect x="0" y="15.200" width="16" height="3.600" fill="#e3dde3"/></svg>
<div class="t" style="left:922.70px;top:68.75px;font-size:12.5px;color:#a3a3a3;letter-spacing:-0.628px;">Shape Fill</div>
<svg class="abs" style="left:975.8px;top:72.5px;" width="6" height="4" viewBox="0 0 6 4"><path d="M0 0.200h6l-3 3.300z" fill="#b0b0b0"/></svg>
<svg class="abs" style="left:903px;top:88px;" width="18" height="14" viewBox="0 0 18 14"><path d="M11.500 2h-10v10h3.500" fill="none" stroke="#a3a3a3" stroke-width="1"/><path d="M14 1.500l2 2-7.500 7.500-3 1 1-3z" fill="#a3a3a3"/></svg>
<div class="t" style="left:922.70px;top:91.75px;font-size:12.5px;color:#a3a3a3;letter-spacing:-0.417px;">Shape Outline</div>
<svg class="abs" style="left:999.7px;top:95.5px;" width="6" height="4" viewBox="0 0 6 4"><path d="M0 0.200h6l-3 3.300z" fill="#b0b0b0"/></svg>
<svg class="abs" style="left:903px;top:113px;" width="18" height="14" viewBox="0 0 18 14"><path d="M5.500 2.500q0.700-1.300 2-1.300h6.500q2 0 1.500 2l-2 6.500q-0.500 1.800-2.500 1.800h-7.500q-2.300 0-1.500-2z" fill="#a3a3a3"/><path d="M5.800 2.300q0.500-1 1.700-1h5.500q1.500 0 1 1.500l-1.800 5.500q-0.400 1.200-1.700 1.200h-7q-1.500 0-1-1.300z" fill="#f5f1f6"/></svg>
<div class="t" style="left:922.70px;top:114.75px;font-size:12.5px;color:#a3a3a3;letter-spacing:-0.600px;">Shape Effects</div>
<svg class="abs" style="left:995.7px;top:118.5px;" width="6" height="4" viewBox="0 0 6 4"><path d="M0 0.200h6l-3 3.300z" fill="#b0b0b0"/></svg>
<div class="t" style="left:809.90px;top:137.75px;font-size:12.5px;color:#666;letter-spacing:-0.378px;">Drawing</div>
<svg class="abs" style="left:1002.8px;top:140.5px;" width="8" height="8" viewBox="0 0 8 8"><g fill="none" stroke="#b0b0b0" stroke-width="1"><path d="M0.500 5v-4.500h4.500"/><path d="M3 3l4 4"/></g><path d="M7.500 3.800v3.700h-3.700z" fill="#b0b0b0"/></svg>
<svg class="abs" style="left:1022px;top:67px;" width="16" height="15" viewBox="0 0 16 15"><circle cx="9.500" cy="5.500" r="4.300" fill="none" stroke="#3b75c0" stroke-width="1.600"/><path d="M6.300 8.700l-5 5" stroke="#3b75c0" stroke-width="2.200"/></svg>
<div class="t" style="left:1041.10px;top:68.75px;font-size:12.5px;color:#444;letter-spacing:-0.679px;">Find</div>
<div class="t" style="left:1021.20px;top:88.50px;font-size:10px;color:#444;">ab</div>
<div class="t" style="left:1026.80px;top:88.50px;font-size:10px;color:#8e3fa3;">b</div>
<div class="t" style="left:1026.40px;top:96.50px;font-size:10px;color:#444;">ac</div>
<div class="t" style="left:1032.00px;top:96.50px;font-size:10px;color:#3b75c0;">c</div>
<svg class="abs" style="left:1021px;top:98px;" width="7" height="7" viewBox="0 0 7 7"><path d="M1.500 0.500v3.500h4M3.800 2l1.900 2-1.900 2" fill="none" stroke="#3b75c0" stroke-width="1.100"/></svg>
<div class="t" style="left:1041.10px;top:91.75px;font-size:12.5px;color:#444;letter-spacing:-0.851px;">Replace</div>
<svg class="abs" style="left:1091.3px;top:95.5px;" width="6" height="4" viewBox="0 0 6 4"><path d="M0 0.200h6l-3 3.300z" fill="#666"/></svg>
<svg class="abs" style="left:1025px;top:112px;" width="11" height="16" viewBox="0 0 11 16"><path d="M1 0.800v11.500l2.800-2.600 2.100 4.800 1.700-0.800-2.100-4.600h3.800z" fill="#fff" stroke="#555" stroke-width="1"/></svg>
<div class="t" style="left:1040.70px;top:114.75px;font-size:12.5px;color:#444;letter-spacing:-0.740px;">Select</div>
<svg class="abs" style="left:1074.6px;top:118.5px;" width="6" height="4" viewBox="0 0 6 4"><path d="M0 0.200h6l-3 3.300z" fill="#666"/></svg>
<div class="t" style="left:1041.70px;top:137.75px;font-size:12.5px;color:#666;letter-spacing:-0.246px;">Editing</div>
<svg class="abs" style="left:1158.5px;top:141px;" width="10" height="6" viewBox="0 0 10 6"><path d="M0.800 5.200l4.200-4 4.200 4" fill="none" stroke="#555" stroke-width="1.500"/></svg>
<div class="abs" style="left:106px;top:155px;width:15px;height:473px;background:#dcdcdc;"></div>
<div class="abs" style="left:106px;top:155px;width:15px;height:14px;background:#fff;border:1px solid #c6c6c6"></div>
<svg class="abs" style="left:110px;top:160px;" width="7" height="4" viewBox="0 0 7 4"><path d="M0 4h7l-3.500-3.800z" fill="#666"/></svg>
<div class="abs" style="left:106px;top:170px;width:15px;height:420px;background:#fff;border:1px solid #c6c6c6"></div>
<div class="abs" style="left:106px;top:613px;width:15px;height:15px;background:#fff;border:1px solid #c6c6c6"></div>
<svg class="abs" style="left:110px;top:619px;" width="7" height="4" viewBox="0 0 7 4"><path d="M0 0h7l-3.500 3.800z" fill="#666"/></svg>
<div class="abs" style="left:1162px;top:155px;width:15px;height:416px;background:#dcdcdc;"></div>
<div class="abs" style="left:1162px;top:155px;width:15px;height:15px;background:#fff;border:1px solid #c6c6c6"></div>
<svg class="abs" style="left:1166px;top:160px;" width="7" height="4" viewBox="0 0 7 4"><path d="M0 4h7l-3.500-3.800z" fill="#666"/></svg>
<div class="abs" style="left:1162px;top:256px;width:15px;height:43px;background:#fff;border:1px solid #c6c6c6"></div>
<div class="abs" style="left:1162px;top:556px;width:15px;height:15px;background:#fff;border:1px solid #c6c6c6"></div>
<svg class="abs" style="left:1166px;top:562px;" width="7" height="4" viewBox="0 0 7 4"><path d="M0 0h7l-3.500 3.800z" fill="#666"/></svg>
<svg class="abs" style="left:1165.5px;top:576px;" width="8" height="8" viewBox="0 0 8 8"><path d="M0 4h8l-4-4zM0 8h8l-4-4z" fill="#666"/></svg>
<svg class="abs" style="left:1165.5px;top:594px;" width="8" height="8" viewBox="0 0 8 8"><path d="M0 0h8l-4 4zM0 4h8l-4 4z" fill="#666"/></svg>
<div class="t" style="left:11.98px;top:168.75px;font-size:15.5px;color:#444;">1</div>
<svg class="abs" style="left:12px;top:188.5px;" width="9.5" height="9.5" viewBox="0 0 10 10"><path d="M5 0l1.300 3.400 3.700 0.200-2.900 2.300 1 3.600-3.100-2-3.100 2 1-3.600-2.900-2.300 3.700-0.200z" fill="#555"/></svg>
<div class="abs" style="left:11px;top:192px;width:2px;height:1px;background:#777;"></div>
<div class="abs" style="left:27px;top:171.0px;width:59px;height:35px;background:#fff;border:1px solid #c3c3c3"></div>
<svg class="abs" style="left:28.5px;top:172.5px;" width="56" height="32" viewBox="0 0 57 33"><defs><linearGradient id="tg1" x1="0" y1="0" x2="0" y2="1"><stop offset="0" stop-color="#c9dcf3"/><stop offset="0.450" stop-color="#fbfcfe"/><stop offset="0.600" stop-color="#fbfcfe"/><stop offset="1" stop-color="#c6daf3"/></linearGradient></defs><rect width="57" height="33" fill="url(#tg1)"/><rect x="6.500" y="3" width="2" height="26" fill="#b5761c"/><rect x="5" y="5.500" width="16" height="1.800" fill="#b5761c"/><rect x="9.500" y="9.500" width="12.500" height="4" fill="#ee4466"/><rect x="10.500" y="10.500" width="10.500" height="1.800" fill="#fbd0d8"/>
<text x="24.500" y="8.500" font-family="Liberation Sans,sans-serif" font-size="4.500" fill="#3b78d0">Real Estate</text><path d="M28.500 11.200h6" stroke="#6b9be0" stroke-width="0.800"/>
<circle cx="36" cy="14" r="2.600" fill="#f9e04a"/><path d="M4 24.500h44" stroke="#5b8a3a" stroke-width="1.200"/>
<path d="M17.500 16l6 6h-1.300v4h-9.400v-4h-1.300z" fill="#f25a68" stroke="#f7b0b8" stroke-width="1"/><path d="M29.500 15l6 6h-1.300v4.500h-9.400v-4.500h-1.300z" fill="#f6d628" stroke="#fae98a" stroke-width="1"/><path d="M41.500 16.500l6 6h-1.300v4h-9.400v-4h-1.300z" fill="#58adb5" stroke="#a8d5da" stroke-width="1"/><rect x="16.800" y="22.500" width="1.400" height="3" fill="#7a2a30"/><rect x="28.800" y="22" width="1.400" height="3" fill="#80701a"/><rect x="40.800" y="23" width="1.400" height="3" fill="#2a5a60"/></svg>
<div class="t" style="left:11.98px;top:221.75px;font-size:15.5px;color:#444;">2</div>
<svg class="abs" style="left:12px;top:240.5px;" width="9.5" height="9.5" viewBox="0 0 10 10"><path d="M5 0l1.300 3.400 3.700 0.200-2.900 2.300 1 3.600-3.100-2-3.100 2 1-3.600-2.900-2.300 3.700-0.200z" fill="#555"/></svg>
<div class="abs" style="left:11px;top:244px;width:2px;height:1px;background:#777;"></div>
<div class="abs" style="left:27px;top:224.0px;width:59px;height:35px;background:#fff;border:1px solid #c3c3c3"></div>
<svg class="abs" style="left:28.5px;top:225.5px;" width="56" height="32" viewBox="0 0 57 33"><defs><linearGradient id="tg2" x1="0" y1="0" x2="0" y2="1"><stop offset="0" stop-color="#c9dcf3"/><stop offset="0.450" stop-color="#fbfcfe"/><stop offset="0.600" stop-color="#fbfcfe"/><stop offset="1" stop-color="#c6daf3"/></linearGradient></defs><rect width="57" height="33" fill="url(#tg2)"/><path d="M2 3h15" stroke="#6b9be0" stroke-width="0.900"/><path d="M20 5h8" stroke="#6b9be0" stroke-width="0.700"/><path d="M2 6.500h7M2 8.500h8M2 10.500h6" stroke="#999" stroke-width="0.600"/><path d="M3 14h5M3 16h6M4 19h4" stroke="#e8b0b0" stroke-width="0.600"/>
<circle cx="24.500" cy="17" r="9.500" fill="#edc93c"/><path d="M24.500 17l-5.500-7.700a9.500 9.500 0 0 1 5.500-1.800z" fill="#f08c1c"/><path d="M24.500 17l-8.200-4.700a9.500 9.500 0 0 1 2.700-3z" fill="#4a98a3"/><path d="M24.500 17l-4 8.600a9.500 9.500 0 0 1-4.200-13.300z" fill="#55803a"/><rect x="30" y="14.800" width="19" height="4.200" rx="1.500" fill="#f2d24a"/>
<path d="M34 6.500h8M34 10.500h8" stroke="#555" stroke-width="0.700"/><path d="M34 7.800h6M34 11.800h6" stroke="#aaa" stroke-width="0.500"/>
<path d="M4 26l2.700-2.700 2.700 2.700v5h-5.400zM10 26l2.700-2.700 2.700 2.700v5h-5.400z" fill="#b8c8c0" fill-opacity="0.800"/><path d="M37 26l2.700-2.700 2.700 2.700v5h-5.400z" fill="#f0b8c0" fill-opacity="0.800"/><path d="M42 26l2.700-2.700 2.700 2.700v5h-5.400z" fill="#d8c8b8" fill-opacity="0.800"/><path d="M47 26l2.700-2.700 2.700 2.700v5h-5.400z" fill="#a8c8f0" fill-opacity="0.800"/></svg>
<div class="t" style="left:11.98px;top:274.75px;font-size:15.5px;color:#b7472a;">3</div>
<svg class="abs" style="left:12px;top:294.5px;" width="9.5" height="9.5" viewBox="0 0 10 10"><path d="M5 0l1.300 3.400 3.700 0.200-2.900 2.300 1 3.600-3.100-2-3.100 2 1-3.600-2.900-2.300 3.700-0.200z" fill="#555"/></svg>
<div class="abs" style="left:11px;top:298px;width:2px;height:1px;background:#777;"></div>
<div class="abs" style="left:25px;top:275px;width:63px;height:39px;background:#d24726;"></div>
<div class="abs" style="left:28px;top:278px;width:57px;height:33px;background:#fff;"></div>
<svg class="abs" style="left:28.5px;top:278.5px;" width="56" height="32" viewBox="0 0 57 33"><defs><linearGradient id="tg3" x1="0" y1="0" x2="0" y2="1"><stop offset="0" stop-color="#c9dcf3"/><stop offset="0.450" stop-color="#fbfcfe"/><stop offset="0.600" stop-color="#fbfcfe"/><stop offset="1" stop-color="#c6daf3"/></linearGradient></defs><rect width="57" height="33" fill="url(#tg3)"/><path d="M2 3h11" stroke="#6b9be0" stroke-width="0.900"/><path d="M14 3h10" stroke="#1d4f91" stroke-width="0.900"/><path d="M2 6h5" stroke="#555" stroke-width="0.700"/><path d="M2 7.500h12M2 8.800h12M2 10h9" stroke="#bbb" stroke-width="0.500"/><path d="M6 12h5M6 14.200h5M6 16.400h5M6 18.600h5M6 20.800h5" stroke="#999" stroke-width="0.600"/>
<path d="M21.500 18v-10.500l2.700-2.600 2.700 2.600v10.500" fill="none" stroke="#fb8a8a" stroke-width="0.900"/><rect x="23.200" y="8" width="2" height="10" fill="#fbb8bc"/>
<path d="M29 18v-5.500l2.700-2.600 2.700 2.600v5.500" fill="none" stroke="#f8a03b" stroke-width="0.900"/><rect x="30.700" y="13" width="2" height="5" fill="#fdcb85"/>
<path d="M36.500 18v-9l2.700-2.600 2.700 2.600v9" fill="none" stroke="#6ab0b8" stroke-width="0.900"/><rect x="38.200" y="9" width="2" height="9" fill="#a2cbd2"/>
<path d="M44 18v-4l2.700-2.600 2.700 2.600v4" fill="none" stroke="#5f8f46" stroke-width="0.900"/><rect x="45.700" y="14" width="2" height="4" fill="#abc0a3"/>
<rect x="21" y="18.300" width="5.800" height="3" fill="#1a3e6f"/><rect x="28.700" y="18.300" width="5.800" height="3" fill="#1a3e6f"/><rect x="36.300" y="18.300" width="5.800" height="3" fill="#1a3e6f"/><rect x="43.800" y="18.300" width="5.800" height="3" fill="#1a3e6f"/>
<path d="M20.500 24h16M20.500 29.300h16" stroke="#8eaed6" stroke-width="0.500"/><path d="M22 26h4M22 27.500h4M29.500 26h4M29.500 27.500h4" stroke="#777" stroke-width="0.600"/>
<path d="M4.500 26l3.800 4.200v1.800h-7v-2.500z" fill="#f0a0a8" fill-opacity="0.600"/><path d="M8.500 27.500l3 3.200v1.300h-6v-1.300z" fill="#d9b080" fill-opacity="0.600"/><path d="M12 28.800l2.300 2.500v0.700h-4.600v-0.700z" fill="#8ab4ec" fill-opacity="0.700"/>
<path d="M36.500 22.500h3l-1-5 6 5h11.500v9.500h-19.500z" fill="#f9a01b"/><path d="M38 24.500h16" stroke="#1f5aa6" stroke-width="0.900"/><path d="M38 26.500h16M38 28h16M39 29.500h14" stroke="#a86a10" stroke-width="0.500"/></svg>
<div class="t" style="left:11.98px;top:327.75px;font-size:15.5px;color:#444;">4</div>
<svg class="abs" style="left:12px;top:346.5px;" width="9.5" height="9.5" viewBox="0 0 10 10"><path d="M5 0l1.300 3.400 3.700 0.200-2.900 2.300 1 3.600-3.100-2-3.100 2 1-3.600-2.900-2.300 3.700-0.200z" fill="#555"/></svg>
<div class="abs" style="left:11px;top:350px;width:2px;height:1px;background:#777;"></div>
<div class="abs" style="left:27px;top:330.0px;width:59px;height:35px;background:#fff;border:1px solid #c3c3c3"></div>
<svg class="abs" style="left:28.5px;top:331.5px;" width="56" height="32" viewBox="0 0 57 33"><defs><linearGradient id="tg4" x1="0" y1="0" x2="0" y2="1"><stop offset="0" stop-color="#c9dcf3"/><stop offset="0.450" stop-color="#fbfcfe"/><stop offset="0.600" stop-color="#fbfcfe"/><stop offset="1" stop-color="#c6daf3"/></linearGradient></defs><rect width="57" height="33" fill="url(#tg4)"/><path d="M2 3h11" stroke="#6b9be0" stroke-width="0.900"/><path d="M14 3h6" stroke="#1d4f91" stroke-width="0.900"/><path d="M2 7h6" stroke="#666" stroke-width="0.600"/><path d="M2.500 10.500h7M2.500 16.500h7M2.500 22.500h7" stroke="#d05060" stroke-width="0.700"/><path d="M2.500 12h6M2.500 18h6M2.500 24h6" stroke="#bbb" stroke-width="0.500"/>
<rect x="14.500" y="13" width="2" height="15.500" fill="#8fd0d4"/><rect x="46.500" y="13" width="2" height="15.500" fill="#8fd0d4"/>
<path d="M31.500 6l14.500 8v14.500h-29v-14.500z" fill="#c9c9c9"/>
<path d="M12.500 14.300l19-10.300 19 10.300" fill="none" stroke="#1f4f96" stroke-width="1.600"/><rect x="11.500" y="28.200" width="40" height="1.500" fill="#1f4f96"/><path d="M17 20.300h29" stroke="#e8e8e8" stroke-width="0.800"/><path d="M31.500 12v16" stroke="#e8e8e8" stroke-width="0.800"/><path d="M19 15h10M19 22.500h10M34 22.500h10" stroke="#666" stroke-width="0.900"/><path d="M19 17h9M19 18.500h9M19 24.500h9M34 24.500h9M34 17h9" stroke="#a8a090" stroke-width="0.600"/>
<path d="M36.500 3h18.500v9h-11.500l-1.500 3-1-3h-4.500z" fill="#f9a01b"/><path d="M38 5h15.500" stroke="#a85a10" stroke-width="0.900"/><path d="M38 7h15.500M38 8.500h15.500M39 10h13" stroke="#c47a10" stroke-width="0.500"/></svg>
<div class="t" style="left:11.98px;top:380.75px;font-size:15.5px;color:#444;">5</div>
<svg class="abs" style="left:12px;top:400.5px;" width="9.5" height="9.5" viewBox="0 0 10 10"><path d="M5 0l1.300 3.400 3.700 0.200-2.900 2.300 1 3.600-3.100-2-3.100 2 1-3.600-2.900-2.300 3.700-0.200z" fill="#555"/></svg>
<div class="abs" style="left:11px;top:404px;width:2px;height:1px;background:#777;"></div>
<div class="abs" style="left:27px;top:383.0px;width:59px;height:35px;background:#fff;border:1px solid #c3c3c3"></div>
<svg class="abs" style="left:28.5px;top:384.5px;" width="56" height="32" viewBox="0 0 57 33"><defs><linearGradient id="tg5" x1="0" y1="0" x2="0" y2="1"><stop offset="0" stop-color="#c9dcf3"/><stop offset="0.450" stop-color="#fbfcfe"/><stop offset="0.600" stop-color="#fbfcfe"/><stop offset="1" stop-color="#c6daf3"/></linearGradient></defs><rect width="57" height="33" fill="url(#tg5)"/><path d="M2 3h11" stroke="#6b9be0" stroke-width="0.900"/><path d="M14 3h6" stroke="#1d4f91" stroke-width="0.900"/><path d="M2 7h6" stroke="#666" stroke-width="0.600"/><path d="M2.500 10.500h7M2.500 16.500h7M2.500 22.500h7" stroke="#d05060" stroke-width="0.700"/><path d="M2.500 12h6M2.500 18h6M2.500 24h6" stroke="#bbb" stroke-width="0.500"/>
<rect x="14.500" y="13" width="2" height="15.500" fill="#8fd0d4"/><rect x="46.500" y="13" width="2" height="15.500" fill="#8fd0d4"/>
<path d="M31.500 6l14.500 8v14.500h-29v-14.500z" fill="#c9c9c9"/>
<path d="M12.500 14.300l19-10.300 19 10.300" fill="none" stroke="#1f4f96" stroke-width="1.600"/><rect x="11.500" y="28.200" width="40" height="1.500" fill="#1f4f96"/><rect x="41" y="4.500" width="2.800" height="3" fill="#e04a5a"/><path d="M17 20.300h29" stroke="#e8e8e8" stroke-width="0.800"/><path d="M31.500 12v16" stroke="#e8e8e8" stroke-width="0.800"/><path d="M19 15h10M34 15h10M19 22.500h10M34 22.500h10" stroke="#666" stroke-width="0.900"/><path d="M19 17h9M19 18.500h9M19 24.500h9M34 24.500h9M34 17h9M34 18.500h9" stroke="#a8a090" stroke-width="0.600"/></svg>
<div class="t" style="left:11.98px;top:433.75px;font-size:15.5px;color:#444;">6</div>
<svg class="abs" style="left:12px;top:452.5px;" width="9.5" height="9.5" viewBox="0 0 10 10"><path d="M5 0l1.300 3.400 3.700 0.200-2.900 2.300 1 3.600-3.100-2-3.100 2 1-3.600-2.900-2.300 3.700-0.200z" fill="#555"/></svg>
<div class="abs" style="left:11px;top:456px;width:2px;height:1px;background:#777;"></div>
<div class="abs" style="left:27px;top:436.0px;width:59px;height:35px;background:#fff;border:1px solid #c3c3c3"></div>
<svg class="abs" style="left:28.5px;top:437.5px;" width="56" height="32" viewBox="0 0 57 33"><defs><linearGradient id="tg6" x1="0" y1="0" x2="0" y2="1"><stop offset="0" stop-color="#c9dcf3"/><stop offset="0.450" stop-color="#fbfcfe"/><stop offset="0.600" stop-color="#fbfcfe"/><stop offset="1" stop-color="#c6daf3"/></linearGradient></defs><rect width="57" height="33" fill="url(#tg6)"/><path d="M2 3h11" stroke="#6b9be0" stroke-width="0.900"/><path d="M14 3h6" stroke="#1d4f91" stroke-width="0.900"/><path d="M2 7h6" stroke="#666" stroke-width="0.600"/><path d="M2.500 10.500h7M2.500 16.500h7M2.500 22.500h7" stroke="#d05060" stroke-width="0.700"/><path d="M2.500 12h6M2.500 18h6M2.500 24h6" stroke="#bbb" stroke-width="0.500"/>
<rect x="14.500" y="13" width="2" height="15.500" fill="#8fd0d4"/><rect x="46.500" y="13" width="2" height="15.500" fill="#8fd0d4"/>
<path d="M31.500 6l14.500 8v14.500h-29v-14.500z" fill="#c9c9c9"/>
<path d="M12.500 14.300l19-10.300 19 10.300" fill="none" stroke="#1f4f96" stroke-width="1.600"/><rect x="11.500" y="28.200" width="40" height="1.500" fill="#1f4f96"/><rect x="41" y="4.500" width="2.800" height="3" fill="#e04a5a"/><path d="M17 20.300h29" stroke="#e8e8e8" stroke-width="0.800"/><path d="M27 10.500h9M25 15.500h13M25 23h13" stroke="#555" stroke-width="0.900"/><path d="M23 18h17M23 25.500h17" stroke="#a8a090" stroke-width="0.600"/></svg>
<div class="t" style="left:11.98px;top:486.75px;font-size:15.5px;color:#444;">7</div>
<div class="abs" style="left:27px;top:489.0px;width:59px;height:35px;background:#fff;border:1px solid #c3c3c3"></div>
<svg class="abs" style="left:28.5px;top:490.5px;" width="56" height="32" viewBox="0 0 57 33"><defs><linearGradient id="tg7" x1="0" y1="0" x2="0" y2="1"><stop offset="0" stop-color="#c9dcf3"/><stop offset="0.450" stop-color="#fbfcfe"/><stop offset="0.600" stop-color="#fbfcfe"/><stop offset="1" stop-color="#c6daf3"/></linearGradient></defs><rect width="57" height="33" fill="url(#tg7)"/><path d="M2 3h5" stroke="#6b9be0" stroke-width="0.900"/><path d="M8 3h11" stroke="#1d4f91" stroke-width="0.900"/><path d="M2 6.500h5" stroke="#555" stroke-width="0.700"/><path d="M2 8h11M2 9.500h9M5 13h5M5 15.500h5M2 19h11M2 22h10M2 26h10" stroke="#aaa" stroke-width="0.500"/>
<path d="M50 5l6 7v17h-26v-9h8v-8z" fill="#f3edc0" fill-opacity="0.800"/><path d="M25 11l8 7v8h-14v-8z" fill="#f6e4c8" fill-opacity="0.800"/>
<path d="M22.500 8h17" stroke="#f0404a" stroke-width="1.300"/><circle cx="22.500" cy="8" r="1.200" fill="#fff" stroke="#f0404a" stroke-width="0.700"/><path d="M41.500 3.500l2.500 2.300v3.700h-5v-3.700z" fill="#f0404a"/>
<path d="M19 14.500h17" stroke="#f8961b" stroke-width="1.300"/><circle cx="19" cy="14.500" r="1.200" fill="#fff" stroke="#f8961b" stroke-width="0.700"/><path d="M38 10l2.500 2.300v3.700h-5v-3.700z" fill="#f8961b"/>
<path d="M22.500 21h17" stroke="#5f9a46" stroke-width="1.300"/><circle cx="22.500" cy="21" r="1.200" fill="#fff" stroke="#5f9a46" stroke-width="0.700"/><path d="M41.500 16.500l2.500 2.300v3.700h-5v-3.700z" fill="#5f9a46"/>
<path d="M19 27.500h17" stroke="#4ab0b8" stroke-width="1.300"/><circle cx="19" cy="27.500" r="1.200" fill="#fff" stroke="#4ab0b8" stroke-width="0.700"/><path d="M38 23l2.500 2.300v3.700h-5v-3.700z" fill="#4ab0b8"/></svg>
<div class="t" style="left:11.98px;top:539.75px;font-size:15.5px;color:#444;">8</div>
<div class="abs" style="left:27px;top:542.0px;width:59px;height:35px;background:#fff;border:1px solid #c3c3c3"></div>
<svg class="abs" style="left:28.5px;top:543.5px;" width="56" height="32" viewBox="0 0 57 33"><defs><linearGradient id="tg8" x1="0" y1="0" x2="0" y2="1"><stop offset="0" stop-color="#c9dcf3"/><stop offset="0.450" stop-color="#fbfcfe"/><stop offset="0.600" stop-color="#fbfcfe"/><stop offset="1" stop-color="#c6daf3"/></linearGradient></defs><rect width="57" height="33" fill="url(#tg8)"/><path d="M2 3h4" stroke="#6b9be0" stroke-width="0.900"/><path d="M7 3h9" stroke="#1d4f91" stroke-width="0.900"/><path d="M2 6.500h6" stroke="#555" stroke-width="0.700"/><path d="M2 8.500h12M2 10h10M5 13h5M5 15.500h5M5 18h5M5 20.500h5" stroke="#aaa" stroke-width="0.500"/>
<rect x="16" y="8" width="10" height="19" fill="#f8c8d0" fill-opacity="0.700"/><rect x="28" y="7" width="12" height="21" fill="#f2e4a8" fill-opacity="0.800"/><rect x="42" y="9" width="10" height="18" fill="#c8d8f0" fill-opacity="0.800"/>
<path d="M19.500 9l5-4 5 4v8l-3 4 1.500 8-3 1-1-9-4.500-4z" fill="#f0505a"/><path d="M28.500 13l5-4 5 4v8l-3 4 1 6-3 1-1-7-4-4z" fill="#f0b81c"/><path d="M39.500 9l5-4 5 4v8l-3.500 4 1 8-3 0.500-0.500-8.500-4-4z" fill="#4a8ee0"/>
<path d="M21.500 13.500h6M30.500 17.500h6M41.500 13.500h6" stroke="#222" stroke-width="0.900"/><g fill="#f4f4f4" stroke="#ccc" stroke-width="0.300"><circle cx="22" cy="20" r="2.200"/><circle cx="26.500" cy="26" r="2.200"/><circle cx="31" cy="22.500" r="2.200"/><circle cx="35.500" cy="29" r="2.200"/><circle cx="42" cy="26" r="2.200"/><circle cx="46.500" cy="20.500" r="2.200"/></g></svg>
<div class="t" style="left:11.98px;top:592.75px;font-size:15.5px;color:#444;">9</div>
<div class="abs" style="left:27px;top:595.0px;width:59px;height:35px;background:#fff;border:1px solid #c3c3c3"></div>
<svg class="abs" style="left:28.5px;top:596.5px;" width="56" height="32" viewBox="0 0 57 33"><defs><linearGradient id="tg9" x1="0" y1="0" x2="0" y2="1"><stop offset="0" stop-color="#c9dcf3"/><stop offset="0.450" stop-color="#fbfcfe"/><stop offset="0.600" stop-color="#fbfcfe"/><stop offset="1" stop-color="#c6daf3"/></linearGradient></defs><rect width="57" height="33" fill="url(#tg9)"/><path d="M2 3h5" stroke="#6b9be0" stroke-width="0.900"/><path d="M9.500 3h11" stroke="#1d4f91" stroke-width="0.900"/><path d="M27 5h17" stroke="#444" stroke-width="0.900"/><path d="M2.500 6h7" stroke="#666" stroke-width="0.600"/><path d="M3 8.500h8M3 11h8M3 14.500h9M3 16h9M3 19h8M3 21.500h8M3 23h8" stroke="#a8b0c0" stroke-width="0.600"/>
<path d="M44 7l10 9v12h-16v-14z" fill="#f3edc0" fill-opacity="0.700"/><path d="M36 8l8 7v10h-12v-10z" fill="#dce8e0" fill-opacity="0.700"/>
<path d="M24 10.500l5 3.500v7h-10v-7z" fill="#e8b81c"/><circle cx="24" cy="8.500" r="1.500" fill="#e8b81c"/>
<path d="M35.500 12.500l6.500 5v8.500h-13v-8.500z" fill="#4a8ee0"/><circle cx="35.500" cy="10" r="1.600" fill="#4a8ee0"/>
<path d="M46.500 11l5 3.500v7.500h-10v-7.500z" fill="#f0505a"/><circle cx="46.500" cy="9" r="1.500" fill="#f0505a"/>
<path d="M25.500 19.500l5.500 4v6.500h-11v-6.500z" fill="#5f9a46"/><circle cx="21.500" cy="21.500" r="1.400" fill="#5f9a46"/>
<path d="M46 21.500l5 3.500v6h-10v-6z" fill="#4ab0b8"/><rect x="17" y="22" width="1.300" height="7" fill="#f0c0c8"/><rect x="33.500" y="26" width="1.800" height="4.500" fill="#e0b8c8"/>
<path d="M21 15h6M21 17.500h6M31 18h9M31 20.500h9M31 23h9M43.500 16h6M43.500 18.500h6M22 25h7M22 27.500h7M43 26.500h6M43 28.500h6" stroke="#fff" stroke-opacity="0.700" stroke-width="0.600"/></svg>
<div class="abs" style="left:125px;top:153px;width:1px;height:475px;background:#c9c9c9;"></div>
<div class="abs" style="left:128px;top:627px;width:1050px;height:1px;background:#c4c4c4;"></div>
<div class="abs" style="left:249px;top:166px;width:792px;height:446px;border:1px solid #bdbdbd;background:linear-gradient(180deg,#c5d9f2 0%,#d8e5f6 9%,#e8f0fa 19%,#f5f8fd 29%,#fdfeff 39%,#fefeff 56%,#f6f9fd 66%,#e6eefa 78%,#d3e2f5 90%,#c4d9f2 100%)"></div>
<svg class="abs" style="left:0px;top:0px;pointer-events:none;" width="1179" height="653" viewBox="0 0 1179 653"><defs><filter id="bl" x="-20%" y="-20%" width="140%" height="140%"><feGaussianBlur stdDeviation="1.500"/></filter><clipPath id="cp"><rect x="0" y="153" width="1179" height="459"/></clipPath><clipPath id="hc0"><path d="M527.90 279.28L588.20 228.40L648.50 279.28V500H527.90z"/></clipPath><clipPath id="hc1"><path d="M634.40 359.28L694.70 308.40L755.00 359.28V500H634.40z"/></clipPath><clipPath id="hc2"><path d="M740.75 306.18L801.05 255.30L861.35 306.18V500H740.75z"/></clipPath><clipPath id="hc3"><path d="M844.10 384.48L904.40 333.60L964.70 384.48V500H844.10z"/></clipPath></defs><g clip-path="url(#cp)"><path d="M291.500 518.900L345.400 576.600H339.700V611H243V576.600H237.300z" fill="#f08c8c" fill-opacity="0.420"/><path d="M348.300 538.200L391.600 583.800H386.700V611H310.300V583.800H305.600z" fill="#d9a86a" fill-opacity="0.450"/><path d="M398.200 556.400L430.500 590.400H426.700V611H370V590.400H366.500z" fill="#7aaae8" fill-opacity="0.450"/><path d="M541 499.500H962M541 573.500H962" stroke="#8eaed6" stroke-width="1.200"/><path d="M588.4 257.2L609.20 309.5H603.90V415.800H572.90V309.5H567.60z" fill="#fbaaae"/><path clip-path="url(#hc0)" d="M554.60 234.10V486.400H580.30V465.700H593.75V486.400H621.60V234.10" fill="none" stroke="#fb5a5a" stroke-width="4.800"/><path d="M541.80 256.70L587.9 217.60L598.60 226.68V219.10H616.40V241.77L634.80 257.38" fill="none" stroke="#fb5a5a" stroke-width="5.300" stroke-linejoin="miter" stroke-miterlimit="8"/><path d="M696.0 317.7L716.80 370.8H711.50V415.800H680.50V370.8H675.20z" fill="#fdcb85"/><path clip-path="url(#hc1)" d="M661.60 314.10V486.400H687.30V465.700H700.75V486.400H728.60V314.10" fill="none" stroke="#fc9512" stroke-width="4.800"/><path d="M648.30 336.70L694.4 297.60L705.10 306.68V299.10H722.90V321.77L741.30 337.38" fill="none" stroke="#fc9512" stroke-width="5.300" stroke-linejoin="miter" stroke-miterlimit="8"/><path d="M802.6 261.4L823.40 313.5H818.10V415.800H787.10V313.5H781.80z" fill="#a2cbd2"/><path clip-path="url(#hc2)" d="M767.45 261.00V486.400H793.15V465.700H806.60V486.400H834.45V261.00" fill="none" stroke="#4a98a3" stroke-width="4.800"/><path d="M754.65 283.60L800.75 244.50L811.45 253.58V246.00H829.25V268.67L847.65 284.28" fill="none" stroke="#4a98a3" stroke-width="5.300" stroke-linejoin="miter" stroke-miterlimit="8"/><path d="M905.0 344.8L925.80 397.1H920.50V415.800H889.50V397.1H884.20z" fill="#abc0a3"/><path clip-path="url(#hc3)" d="M872.00 339.30V486.400H898.20V465.700H911.65V486.400H939.00V339.30" fill="none" stroke="#4f7f36" stroke-width="4.800"/><path d="M858.00 361.90L904.1 322.80L914.80 331.88V324.30H932.60V346.97L951.00 362.58" fill="none" stroke="#4f7f36" stroke-width="5.300" stroke-linejoin="miter" stroke-miterlimit="8"/><rect x="550.05" y="423" width="80" height="40" fill="#000" fill-opacity="0.420" filter="url(#bl)"/><rect x="548.05" y="421" width="80" height="40" fill="#183d6e"/><rect x="656.8" y="423" width="80" height="40" fill="#000" fill-opacity="0.420" filter="url(#bl)"/><rect x="654.8" y="421" width="80" height="40" fill="#183d6e"/><rect x="763.1" y="423" width="80" height="40" fill="#000" fill-opacity="0.420" filter="url(#bl)"/><rect x="761.1" y="421" width="80" height="40" fill="#183d6e"/><rect x="867.2" y="423" width="80" height="40" fill="#000" fill-opacity="0.420" filter="url(#bl)"/><rect x="865.2" y="421" width="80" height="40" fill="#183d6e"/></g></svg>
<div class="t" style="left:562.40px;top:427.90px;font-size:27.2px;color:#fff;letter-spacing:-1.013px;font-weight:bold;">80%</div>
<div class="t" style="left:668.80px;top:427.90px;font-size:27.2px;color:#fff;letter-spacing:-1.013px;font-weight:bold;">50%</div>
<div class="t" style="left:775.20px;top:427.90px;font-size:27.2px;color:#fff;letter-spacing:-1.013px;font-weight:bold;">70%</div>
<div class="t" style="left:878.80px;top:427.90px;font-size:27.2px;color:#fff;letter-spacing:-1.013px;font-weight:bold;">35%</div>
<div class="t" style="left:262.70px;top:178.85px;font-size:26.3px;color:#4e8fdc;letter-spacing:-0.142px;">Home Grown</div>
<div class="t" style="left:425.10px;top:178.85px;font-size:26.3px;color:#1d4f91;letter-spacing:-0.057px;font-weight:bold;">4 Calculations</div>
<div class="t" style="left:261.90px;top:221.25px;font-size:18.5px;color:#1a1a1a;letter-spacing:-0.001px;">Slide Theme</div>
<div class="t" style="left:261.90px;top:243.91px;font-size:13.17px;color:#111;letter-spacing:-0.022px;">The quick brown fox jumped over</div>
<div class="t" style="left:261.90px;top:258.92px;font-size:13.17px;color:#111;">the lazy dog. The quick brown fox</div>
<div class="t" style="left:261.90px;top:274.92px;font-size:13.17px;color:#111;">jumped over the lazy dog.</div>
<div class="t" style="left:293.20px;top:312.75px;font-size:10.5px;color:#111;">•</div>
<div class="t" style="left:317.40px;top:311.92px;font-size:13.17px;color:#111;letter-spacing:0.004px;">Bullet point 1</div>
<div class="t" style="left:293.20px;top:336.75px;font-size:10.5px;color:#111;">•</div>
<div class="t" style="left:317.40px;top:335.92px;font-size:13.17px;color:#111;letter-spacing:0.004px;">Bullet point 2</div>
<div class="t" style="left:293.20px;top:359.75px;font-size:10.5px;color:#111;">•</div>
<div class="t" style="left:317.40px;top:358.92px;font-size:13.17px;color:#111;letter-spacing:0.004px;">Bullet point 3</div>
<div class="t" style="left:293.20px;top:383.75px;font-size:10.5px;color:#111;">•</div>
<div class="t" style="left:317.40px;top:382.92px;font-size:13.17px;color:#111;letter-spacing:0.004px;">Bullet point 4</div>
<div class="t" style="left:293.20px;top:407.75px;font-size:10.5px;color:#111;">•</div>
<div class="t" style="left:317.40px;top:406.92px;font-size:13.17px;color:#111;letter-spacing:0.004px;">Bullet point 5</div>
<div class="t" style="left:293.20px;top:430.75px;font-size:10.5px;color:#111;">•</div>
<div class="t" style="left:317.40px;top:429.92px;font-size:13.17px;color:#111;letter-spacing:0.004px;">Bullet point 6</div>
<div class="t" style="left:557.30px;top:507.92px;font-size:13.17px;color:#222;letter-spacing:-0.052px;font-weight:bold;">The quick</div>
<div class="t" style="left:556.60px;top:523.91px;font-size:13.17px;color:#222;letter-spacing:-0.057px;font-weight:bold;">brown fox</div>
<div class="t" style="left:548.55px;top:538.65px;font-size:10.7px;color:#111;letter-spacing:0.119px;">jumped over the</div>
<div class="t" style="left:566.40px;top:551.65px;font-size:10.7px;color:#111;letter-spacing:-0.003px;">lazy dog.</div>
<div class="t" style="left:663.70px;top:507.92px;font-size:13.17px;color:#222;letter-spacing:-0.052px;font-weight:bold;">The quick</div>
<div class="t" style="left:663.00px;top:523.91px;font-size:13.17px;color:#222;letter-spacing:-0.057px;font-weight:bold;">brown fox</div>
<div class="t" style="left:654.95px;top:538.65px;font-size:10.7px;color:#111;letter-spacing:0.119px;">jumped over the</div>
<div class="t" style="left:672.80px;top:551.65px;font-size:10.7px;color:#111;letter-spacing:-0.003px;">lazy dog.</div>
<div class="t" style="left:770.10px;top:507.92px;font-size:13.17px;color:#222;letter-spacing:-0.052px;font-weight:bold;">The quick</div>
<div class="t" style="left:769.40px;top:523.91px;font-size:13.17px;color:#222;letter-spacing:-0.057px;font-weight:bold;">brown fox</div>
<div class="t" style="left:761.35px;top:538.65px;font-size:10.7px;color:#111;letter-spacing:0.119px;">jumped over the</div>
<div class="t" style="left:779.20px;top:551.65px;font-size:10.7px;color:#111;letter-spacing:-0.003px;">lazy dog.</div>
<div class="t" style="left:873.70px;top:507.92px;font-size:13.17px;color:#222;letter-spacing:-0.052px;font-weight:bold;">The quick</div>
<div class="t" style="left:873.00px;top:523.91px;font-size:13.17px;color:#222;letter-spacing:-0.057px;font-weight:bold;">brown fox</div>
<div class="t" style="left:864.95px;top:538.65px;font-size:10.7px;color:#111;letter-spacing:0.119px;">jumped over the</div>
<div class="t" style="left:882.80px;top:551.65px;font-size:10.7px;color:#111;letter-spacing:-0.003px;">lazy dog.</div>
<svg class="abs" style="left:740px;top:390px;" width="310" height="225" viewBox="0 0 310 225"><path d="M20.800 83H65L51 10.600L136.600 83H300.300V214H20.800z" fill="#fc9503" fill-opacity="0.900" stroke="#fff" stroke-width="1.200"/></svg>
<div class="t" style="left:775.70px;top:480.90px;font-size:19.2px;color:#1f5aa6;letter-spacing:-0.066px;font-weight:bold;">Note: You can delete any of</div>
<div class="t" style="left:773.90px;top:504.70px;font-size:12.6px;color:#1a1208;letter-spacing:-0.122px;">the columns to fit your needs of the number of</div>
<div class="t" style="left:783.40px;top:520.70px;font-size:12.6px;color:#1a1208;letter-spacing:-0.237px;">points. You can also adjust the height of the</div>
<div class="t" style="left:773.90px;top:535.70px;font-size:12.6px;color:#1a1208;letter-spacing:-0.296px;">houses to some degree and the arrows as well.</div>
<div class="t" style="left:770.40px;top:551.70px;font-size:12.6px;color:#1a1208;letter-spacing:-0.143px;">Click on either the top of the house or the arrow</div>
<div class="t" style="left:782.40px;top:567.70px;font-size:12.6px;color:#1a1208;letter-spacing:-0.227px;">and grab the top edge of the box and drag it</div>
<div class="t" style="left:788.00px;top:583.70px;font-size:12.6px;color:#1a1208;letter-spacing:-0.155px;">either up or down to fit your percentages.</div>
<div class="abs" style="left:1px;top:630px;width:1177px;height:1px;background:#c8c8c8;"></div>
<div class="abs" style="left:1px;top:631px;width:1177px;height:21px;background:#f1f1f1;"></div>
<div class="t" style="left:8.80px;top:635.00px;font-size:12px;color:#444;letter-spacing:-0.270px;">Slide 3 of 9</div>
<svg class="abs" style="left:85px;top:634px;" width="15" height="14" viewBox="0 0 15 14"><g fill="none" stroke="#555" stroke-width="1"><path d="M6.500 2.500v9.500M6.500 2.500c-1.500-1.300-3.500-1.500-5.500-1.500v9.500c2 0 4 0.200 5.500 1.500M6.500 12l0 1.500M6.500 2.500c1-1 2.200-1.400 3.500-1.500M13.500 6.500v4c-3 0-5 0.200-7 1.500"/><path d="M8.800 4.800l1.800 2 3.200-4.500" stroke-width="1.200"/></g></svg>
<div class="t" style="left:115.70px;top:635.00px;font-size:12px;color:#444;letter-spacing:-0.314px;">English (United States)</div>
<svg class="abs" style="left:659px;top:634px;" width="12" height="13" viewBox="0 0 12 13"><path d="M6 1.500l3 3.500h-6z" fill="#666"/><path d="M0.500 7.500h11M0.500 9.800h11M0.500 12h11" stroke="#666" stroke-width="1"/></svg>
<div class="t" style="left:675.40px;top:635.00px;font-size:12px;color:#444;letter-spacing:-0.589px;">Notes</div>
<svg class="abs" style="left:725px;top:634px;" width="14" height="13" viewBox="0 0 14 13"><path d="M1 1h12v8h-6l-3 3v-3h-3z" fill="#666"/></svg>
<div class="t" style="left:741.70px;top:635.00px;font-size:12px;color:#444;letter-spacing:-0.614px;">Comments</div>
<div class="abs" style="left:815px;top:631px;width:37px;height:21px;background:#c6c6c6;"></div>
<svg class="abs" style="left:827px;top:634px;" width="15" height="14" viewBox="0 0 15 14"><g fill="none" stroke="#555" stroke-width="1"><rect x="0.500" y="0.500" width="13" height="12"/><path d="M3.500 0.500v12"/><rect x="5.500" y="2.500" width="8" height="5"/></g></svg>
<svg class="abs" style="left:865px;top:634px;" width="15" height="13" viewBox="0 0 15 13"><g fill="none" stroke="#666" stroke-width="1"><rect x="0.500" y="0.500" width="5" height="4.500"/><rect x="9" y="0.500" width="5" height="4.500"/><rect x="0.500" y="8" width="5" height="4.500"/><rect x="9" y="8" width="5" height="4.500"/></g></svg>
<svg class="abs" style="left:902.5px;top:634px;" width="15" height="13" viewBox="0 0 15 13"><g fill="none" stroke="#666" stroke-width="1"><path d="M7 1.500c-2-1-4-1-6.500-1v10c2.500 0 4.500 0 6.500 1.500c2-1.500 4-1.500 6.500-1.500v-10c-2.500 0-4.500 0-6.500 1zM7 1.500v10.500"/><path d="M2 3h3.500M2 5h3.500M2 7h3.500M8.500 3h3.500M8.500 5h3.500M8.500 7h3.500" stroke-width="0.800"/></g></svg>
<svg class="abs" style="left:941px;top:634px;" width="14" height="14" viewBox="0 0 14 14"><g fill="none" stroke="#666" stroke-width="1"><path d="M0 1h14"/><path d="M1.500 1.500v6.500h11v-6.500"/><path d="M7 8v3.500M4 13l3-2 3 2"/></g></svg>
<div class="abs" style="left:972px;top:640px;width:6px;height:2px;background:#555;"></div>
<div class="abs" style="left:981px;top:640px;width:102px;height:1px;background:#8a8a8a;"></div>
<div class="abs" style="left:1032px;top:638px;width:1px;height:5px;background:#8a8a8a;"></div>
<div class="abs" style="left:1021px;top:635px;width:4px;height:11px;background:#555;"></div>
<svg class="abs" style="left:1086px;top:636px;" width="8" height="8" viewBox="0 0 8 8"><path d="M0 4h8M4 0v8" stroke="#555" stroke-width="2"/></svg>
<div class="t" style="left:1110.20px;top:634.00px;font-size:12px;color:#444;letter-spacing:-1.163px;">83 %</div>
<svg class="abs" style="left:1146px;top:633px;" width="15" height="15" viewBox="0 0 15 15"><g fill="none" stroke="#555" stroke-width="1"><rect x="0.500" y="0.500" width="14" height="14"/><path d="M7.500 2.500v3.500M7.500 12.500v-3.500M2.500 7.500h3.500M12.500 7.500h-3.500M6 4l1.500-1.500 1.500 1.500M6 11l1.500 1.500 1.500-1.500M4 6l-1.500 1.500 1.500 1.500M11 6l1.500 1.500-1.500 1.500" stroke-width="0.900"/></g></svg>
<div class="bl" style="left:0"></div><div class="bl" style="left:1178px"></div>
<div class="abs" style="left:0;top:652px;width:1179px;height:1px;background:#b7472a"></div>
</div></div>
</body></html>
